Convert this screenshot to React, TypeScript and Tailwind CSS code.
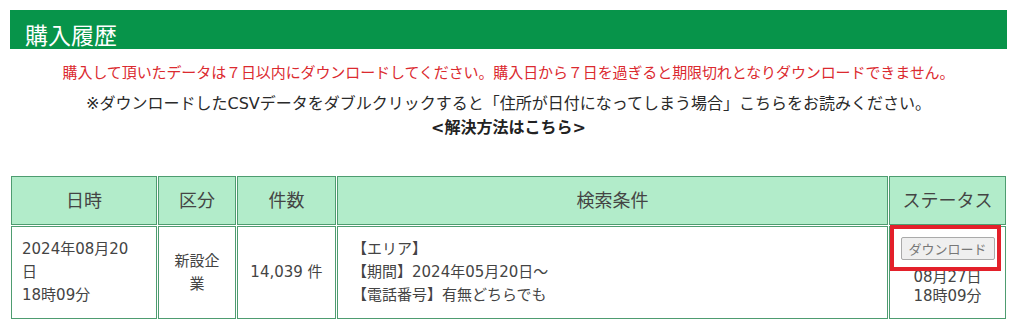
const FONT = "font-['DejaVu_Sans','Noto_Sans_CJK_JP',sans-serif]";

export default function App() {
  return (
    <div className={`${FONT} bg-white w-[1024px] h-[336px] overflow-hidden text-[#333]`}>
      <div className="ml-[10px] pt-[10px] w-[997px]">
        <div className="h-[39px] bg-[#07944a] pl-[15px] pt-[13px]">
          <h1 className="text-white text-[23px] leading-[23px] font-['Noto_Sans_CJK_JP',sans-serif]">購入履歴</h1>
        </div>

        <p className="mt-[11px] text-center text-[15px] leading-[24px] text-[#db2a2f] font-['Noto_Sans_CJK_JP',sans-serif] tracking-[-0.1px]">
          購入して頂いたデータは７日以内にダウンロードしてください。購入日から７日を過ぎると期限切れとなりダウンロードできません。
        </p>

        <div className="mt-[8px] text-center text-[16px] leading-[24px] text-[#2a2a2a]">
          <p>※ダウンロードしたCSVデータをダブルクリックすると「住所が日付になってしまう場合」こちらをお読みください。</p>
          <p className="font-bold">
            <a className="text-[#222]">&lt;解決方法はこちら&gt;</a>
          </p>
        </div>

        <table className="mt-[35px] w-[997px] table-fixed border-separate border-spacing-[1px] text-[15px] leading-[23px] text-[#444]">
          <colgroup>
            <col className="w-[146px]" />
            <col className="w-[78px]" />
            <col className="w-[99px]" />
            <col className="w-[551px]" />
            <col className="w-[117px]" />
          </colgroup>
          <thead>
            <tr className="h-[49px]">
              {["日時", "区分", "件数", "検索条件", "ステータス"].map((h) => (
                <th
                  key={h}
                  className="border border-[#4e9c70] bg-[#b2ecca] text-[18px] font-normal text-[#444] text-center align-middle"
                >
                  {h}
                </th>
              ))}
            </tr>
          </thead>
          <tbody>
            <tr className="h-[93px]">
              <td className="border border-[#4e9c70] pl-[10px] pr-[16px] align-middle">
                2024年08月20日
                <br />
                18時09分
              </td>
              <td className="border border-[#4e9c70] px-[9px] text-center align-middle">新設企業</td>
              <td className="border border-[#4e9c70] text-center align-middle">14,039 件</td>
              <td className="border border-[#4e9c70] pl-[14px] align-middle">
                【エリア】
                <br />
                【期間】2024年05月20日～
                <br />
                【電話番号】有無どちらでも
              </td>
              <td className="relative border border-[#4e9c70] text-center align-top pt-[10px]">
                <button className="h-[23px] w-[94px] rounded-[2px] border border-[#aaa] bg-[#efefef] text-[13px] leading-[21px] text-[#777] font-['Noto_Sans_CJK_JP',sans-serif]">
                  ダウンロード
                </button>
                <div className="mt-[6px] leading-[20px]">08月27日</div>
                <div className="leading-[19px]">18時09分</div>
                <div className="absolute left-0 top-[-2px] w-[111px] h-[46px] border-[4px] border-[#e3202a]" />
              </td>
            </tr>
          </tbody>
        </table>
      </div>
    </div>
  );
}
